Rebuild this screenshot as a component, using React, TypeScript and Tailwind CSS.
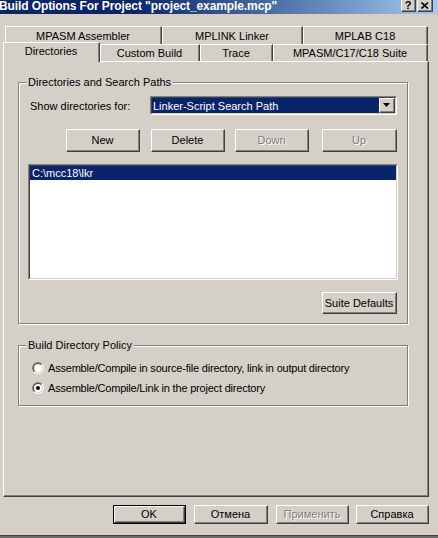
import type { ReactNode } from "react";

function Raised({
  className = "",
  children,
}: {
  className?: string;
  children?: ReactNode;
}) {
  return (
    <div
      className={`border border-t-white border-l-white border-r-[#404040] border-b-[#404040] ${className}`}
    >
      <div className="w-full h-full border-r border-b border-r-[#808080] border-b-[#808080] flex items-center justify-center">
        {children}
      </div>
    </div>
  );
}

function Btn({
  label,
  className = "",
  disabled = false,
}: {
  label: string;
  className?: string;
  disabled?: boolean;
}) {
  return (
    <Raised className={className}>
      <span
        className={
          disabled ? "text-[#808080] [text-shadow:1px_1px_0_#fff]" : "text-black"
        }
      >
        {label}
      </span>
    </Raised>
  );
}

function Tab({ label, className }: { label: string; className: string }) {
  return (
    <div
      className={`border-t border-l border-r border-t-white border-l-white border-r-[#404040] flex ${className}`}
    >
      <div className="flex-1 border-r border-r-[#808080] flex items-center justify-center">
        {label}
      </div>
    </div>
  );
}

function Radio({ checked, label }: { checked?: boolean; label: string }) {
  return (
    <div className="flex items-center h-[16px] ml-[13px]">
      <div className="w-[12px] h-[12px] rounded-full border border-t-[#808080] border-l-[#808080] border-b-white border-r-white">
        <div className="w-full h-full rounded-full border border-t-[#404040] border-l-[#404040] border-b-[#d4d0c8] border-r-[#d4d0c8] bg-white flex items-center justify-center">
          {checked && <div className="w-[4px] h-[4px] rounded-full bg-black" />}
        </div>
      </div>
      <span className="ml-[4px] tracking-[-0.2px]">{label}</span>
    </div>
  );
}

export default function App() {
  return (
    <div className="w-[438px] h-[538px] bg-[#d4d0c8] flex flex-col overflow-hidden font-['Liberation_Sans',Arial,sans-serif] text-[11px] text-black leading-[14px]">
      {/* title bar */}
      <div className="h-[14px] flex items-start bg-linear-to-r from-[#0a246a] from-30% to-[#a6caf0] overflow-hidden">
        <span className="-ml-[1px] text-white font-bold text-[12px] leading-[12px] tracking-[-0.1px] whitespace-nowrap">
          Build Options For Project "project_example.mcp"
        </span>
        <div className="ml-auto flex mr-[5px] -mt-[2px]">
          <Raised className="w-[15px] h-[14px] bg-[#d4d0c8]">
            <span className="font-bold text-[11px] leading-[10px] mt-[1px]">?</span>
          </Raised>
          <Raised className="w-[16px] h-[14px] ml-[1px] bg-[#d4d0c8]">
            <svg width="8" height="7" viewBox="0 0 8 7" className="mt-[1px]">
              <path d="M0.5 0.5 L7 6.5 M7 0.5 L0.5 6.5" stroke="#000" strokeWidth="1.6" />
            </svg>
          </Raised>
        </div>
      </div>

      {/* tabs */}
      <div className="mt-[12px] ml-[5px] flex h-[18px]">
        <Tab label="MPASM Assembler" className="w-[157px] h-[18px]" />
        <Tab label="MPLINK Linker" className="w-[141px] h-[18px]" />
        <Tab label="MPLAB C18" className="w-[125px] h-[18px]" />
      </div>
      <div className="ml-[3px] flex items-end h-[17px]">
        <div className="relative z-10 w-[97px] h-[20px] -mb-[1px] border-t border-l border-r border-t-white border-l-white border-r-[#404040] bg-[#d4d0c8] flex">
          <div className="flex-1 border-r border-r-[#808080] flex items-center justify-center pb-[4px]">
            Directories
          </div>
        </div>
        <Tab label="Custom Build" className="w-[100px] h-[17px]" />
        <Tab label="Trace" className="w-[73px] h-[17px]" />
        <Tab label="MPASM/C17/C18 Suite" className="w-[155px] h-[17px]" />
      </div>

      {/* panel */}
      <div className="ml-[3px] w-[426px] h-[436px] border border-t-white border-l-white border-r-[#404040] border-b-[#404040]">
        <div className="w-full h-full border-r border-b border-r-[#808080] border-b-[#808080] flex flex-col">
          {/* group 1 */}
          <div className="relative mt-[20px] ml-[14px] w-[390px] h-[242px] border border-[#808080] shadow-[inset_1px_1px_0_#fff,1px_1px_0_#fff] flex flex-col">
            <span className="absolute -top-[8px] left-[7px] px-[2px] bg-[#d4d0c8]">
              Directories and Search Paths
            </span>
            <div className="mt-[13px] flex items-center h-[19px]">
              <span className="ml-[11px] w-[120px]">Show directories for:</span>
              <div className="w-[247px] h-[19px] border border-t-[#808080] border-l-[#808080] border-b-white border-r-white">
                <div className="w-full h-full border border-t-[#404040] border-l-[#404040] border-b-[#d4d0c8] border-r-[#d4d0c8] flex bg-white">
                  <div className="flex-1 bg-[#0a246a] text-white flex items-center pl-[1px]">
                    Linker-Script Search Path
                  </div>
                  <Raised className="w-[16px] h-full bg-[#d4d0c8]">
                    <svg width="7" height="4" viewBox="0 0 7 4">
                      <path d="M0 0 H7 L3.5 4 Z" fill="#000" />
                    </svg>
                  </Raised>
                </div>
              </div>
            </div>
            <div className="mt-[14px] flex h-[23px]">
              <Btn label="New" className="ml-[47px] w-[74px] h-[23px]" />
              <Btn label="Delete" className="ml-[11px] w-[74px] h-[23px]" />
              <Btn label="Down" disabled className="ml-[10px] w-[74px] h-[23px]" />
              <Btn label="Up" disabled className="ml-[13px] w-[75px] h-[23px]" />
            </div>
            <div className="mt-[12px] ml-[9px] w-[370px] h-[116px] border border-t-[#808080] border-l-[#808080] border-b-white border-r-white">
              <div className="w-full h-full border border-t-[#404040] border-l-[#404040] border-b-[#d4d0c8] border-r-[#d4d0c8] bg-white">
                <div className="h-[14px] bg-[#0a246a] text-white pl-[2px] flex items-center">
                  C:\mcc18\lkr
                </div>
              </div>
            </div>
            <Btn label="Suite Defaults" className="mt-[12px] ml-[303px] w-[75px] h-[22px]" />
          </div>

          {/* group 2 */}
          <div className="relative mt-[21px] ml-[14px] w-[390px] h-[61px] border border-[#808080] shadow-[inset_1px_1px_0_#fff,1px_1px_0_#fff] flex flex-col">
            <span className="absolute -top-[8px] left-[7px] px-[2px] bg-[#d4d0c8]">
              Build Directory Policy
            </span>
            <div className="mt-[14px] flex flex-col gap-[4px]">
              <Radio label="Assemble/Compile in source-file directory, link in output directory" />
              <Radio checked label="Assemble/Compile/Link in the project directory" />
            </div>
          </div>
        </div>
      </div>

      {/* dialog buttons */}
      <div className="mt-[8px] flex h-[19px]">
        <div className="ml-[113px] w-[73px] h-[19px] border border-black">
          <Btn label="OK" className="w-full h-full" />
        </div>
        <Btn label="Отмена" className="ml-[8px] w-[74px] h-[19px]" />
        <Btn label="Применить" disabled className="ml-[8px] w-[73px] h-[19px]" />
        <Btn label="Справка" className="ml-[7px] w-[73px] h-[19px]" />
      </div>

      <div className="mt-auto h-[3px] border-t border-t-[#404040] bg-[#6b6b6b]" />
    </div>
  );
}
